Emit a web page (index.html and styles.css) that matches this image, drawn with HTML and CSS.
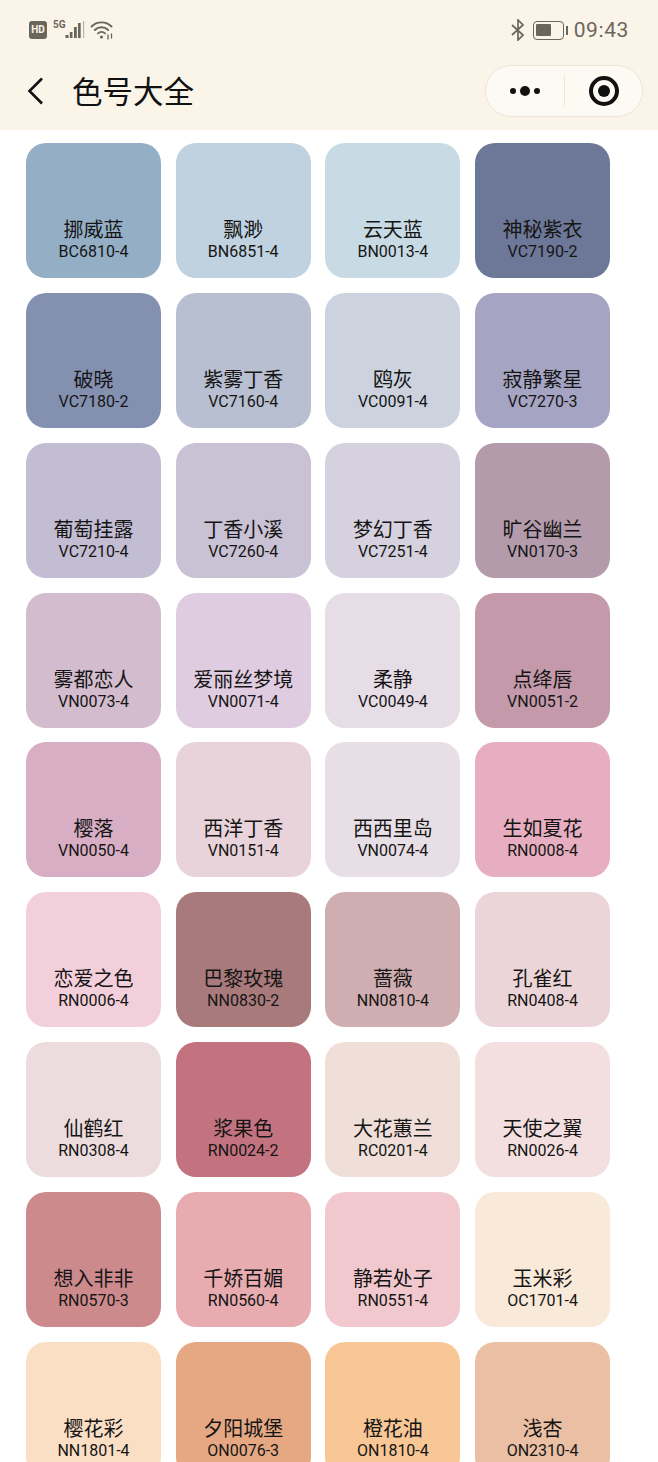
FILE: index.html
```html
<!DOCTYPE html>
<html lang="zh-CN">
<head>
    <meta charset="UTF-8">
    <meta name="viewport" content="width=device-width, initial-scale=1">
    <title>色号大全</title>
    <link rel="stylesheet" href="styles.css">
</head>
<body>

<header class="top">
    <div class="status">
        <div class="status-left">
            <span class="hd">HD</span>
            <span class="net">5G</span>
            <svg class="signal" width="20" height="20" viewBox="0 0 20 20">
                <rect x="0.5" y="15" width="3" height="3" fill="#6b665c"/>
                <rect x="4.800" y="12" width="2.700" height="6" fill="#6b665c"/>
                <rect x="9" y="7" width="2.800" height="11" fill="#6b665c"/>
                <rect x="13" y="3" width="2.700" height="15" fill="#6b665c"/>
                <rect x="18" y="1" width="1.200" height="17" fill="#b9b5aa"/>
            </svg>
            <svg class="wifi" width="24" height="20" viewBox="0 0 24 20" fill="none" stroke="#6b665c" stroke-width="1.900" stroke-linecap="round">
                <path d="M1.500 6.500C7 1 16 1 21.500 6.500"/>
                <path d="M4.800 10C8.500 6.400 14.500 6.400 18.200 10"/>
                <path d="M8 13.400C10 11.600 13 11.600 15 13.400"/>
                <circle cx="11.500" cy="17" r="1.600" fill="#6b665c" stroke="none"/>
                <path d="M18 15v4M21.500 14v4" stroke-width="1.300"/>
            </svg>
        </div>
        <div class="status-right">
            <svg class="bt" width="16" height="22" viewBox="0 0 16 22" fill="none" stroke="#6b665c" stroke-width="1.700">
                <path d="M2 6l11 10-5 5V1l5 5L2 16"/>
            </svg>
            <span class="battery"><span class="battery-level"></span></span>
            <span class="battery-tip"></span>
            <span class="clock">09:43</span>
        </div>
    </div>
    <div class="nav">
        <svg class="back" width="16" height="28" viewBox="0 0 16 28" fill="none" stroke="#111" stroke-width="2.600">
            <path d="M15 1.500L2.500 14 15 26.500"/>
        </svg>
        <h1 class="title">色号大全</h1>
        <div class="capsule">
            <div class="capsule-part">
                <span class="dot"></span><span class="dot dot-big"></span><span class="dot"></span>
            </div>
            <span class="capsule-line"></span>
            <div class="capsule-part">
                <span class="target"></span>
            </div>
        </div>
    </div>
</header>

<main class="swatches">
    <div class="swatch c-1"><p class="name">挪威蓝</p><p class="code">BC6810-4</p></div>
    <div class="swatch c-2"><p class="name">飘渺</p><p class="code">BN6851-4</p></div>
    <div class="swatch c-3"><p class="name">云天蓝</p><p class="code">BN0013-4</p></div>
    <div class="swatch c-4"><p class="name">神秘紫衣</p><p class="code">VC7190-2</p></div>

    <div class="swatch c-5"><p class="name">破晓</p><p class="code">VC7180-2</p></div>
    <div class="swatch c-6"><p class="name">紫雾丁香</p><p class="code">VC7160-4</p></div>
    <div class="swatch c-7"><p class="name">鸥灰</p><p class="code">VC0091-4</p></div>
    <div class="swatch c-8"><p class="name">寂静繁星</p><p class="code">VC7270-3</p></div>

    <div class="swatch c-9"><p class="name">葡萄挂露</p><p class="code">VC7210-4</p></div>
    <div class="swatch c-10"><p class="name">丁香小溪</p><p class="code">VC7260-4</p></div>
    <div class="swatch c-11"><p class="name">梦幻丁香</p><p class="code">VC7251-4</p></div>
    <div class="swatch c-12"><p class="name">旷谷幽兰</p><p class="code">VN0170-3</p></div>

    <div class="swatch c-13"><p class="name">雾都恋人</p><p class="code">VN0073-4</p></div>
    <div class="swatch c-14"><p class="name">爱丽丝梦境</p><p class="code">VN0071-4</p></div>
    <div class="swatch c-15"><p class="name">柔静</p><p class="code">VC0049-4</p></div>
    <div class="swatch c-16"><p class="name">点绛唇</p><p class="code">VN0051-2</p></div>

    <div class="swatch c-17"><p class="name">樱落</p><p class="code">VN0050-4</p></div>
    <div class="swatch c-18"><p class="name">西洋丁香</p><p class="code">VN0151-4</p></div>
    <div class="swatch c-19"><p class="name">西西里岛</p><p class="code">VN0074-4</p></div>
    <div class="swatch c-20"><p class="name">生如夏花</p><p class="code">RN0008-4</p></div>

    <div class="swatch c-21"><p class="name">恋爱之色</p><p class="code">RN0006-4</p></div>
    <div class="swatch c-22"><p class="name">巴黎玫瑰</p><p class="code">NN0830-2</p></div>
    <div class="swatch c-23"><p class="name">蔷薇</p><p class="code">NN0810-4</p></div>
    <div class="swatch c-24"><p class="name">孔雀红</p><p class="code">RN0408-4</p></div>

    <div class="swatch c-25"><p class="name">仙鹤红</p><p class="code">RN0308-4</p></div>
    <div class="swatch c-26"><p class="name">浆果色</p><p class="code">RN0024-2</p></div>
    <div class="swatch c-27"><p class="name">大花蕙兰</p><p class="code">RC0201-4</p></div>
    <div class="swatch c-28"><p class="name">天使之翼</p><p class="code">RN0026-4</p></div>

    <div class="swatch c-29"><p class="name">想入非非</p><p class="code">RN0570-3</p></div>
    <div class="swatch c-30"><p class="name">千娇百媚</p><p class="code">RN0560-4</p></div>
    <div class="swatch c-31"><p class="name">静若处子</p><p class="code">RN0551-4</p></div>
    <div class="swatch c-32"><p class="name">玉米彩</p><p class="code">OC1701-4</p></div>

    <div class="swatch c-33"><p class="name">樱花彩</p><p class="code">NN1801-4</p></div>
    <div class="swatch c-34"><p class="name">夕阳城堡</p><p class="code">ON0076-3</p></div>
    <div class="swatch c-35"><p class="name">橙花油</p><p class="code">ON1810-4</p></div>
    <div class="swatch c-36"><p class="name">浅杏</p><p class="code">ON2310-4</p></div>
</main>

</body>
</html>
```

FILE: styles.css
```css
* {
    box-sizing: border-box;
}

html, body {
    height: 100%;
}

body {
    margin: 0;
    height: 1462px;
    overflow: hidden;
    background: #fff;
    font-family: "Roboto", "Noto Sans CJK SC", sans-serif;
    color: #151515;
}

p, h1 {
    margin: 0;
    font-weight: 400;
}

.top {
    height: 130px;
    background: #fbf4e9;
}

.status {
    height: 60px;
    padding: 18px 29px 0 29px;
    display: flex;
    justify-content: space-between;
    align-items: flex-start;
    color: #6b665c;
}

.status-left, .status-right {
    display: flex;
    align-items: center;
    height: 24px;
}

.hd {
    width: 18px;
    height: 18px;
    border-radius: 3px;
    background: #6b665c;
    color: #fbf4e9;
    font-size: 10px;
    font-weight: 700;
    line-height: 18px;
    text-align: center;
}

.net {
    font-size: 10px;
    font-weight: 700;
    margin: -11px 0 0 6px;
}

.signal {
    margin-left: -1px;
}

.wifi {
    margin-left: 5px;
}

.bt {
    margin-right: 7px;
}

.battery {
    width: 31px;
    height: 19px;
    border: 1.500px solid #6b665c;
    border-radius: 4px;
    padding: 2px;
}

.battery-level {
    display: block;
    width: 15px;
    height: 12px;
    border-radius: 1px;
    background: #6b665c;
}

.battery-tip {
    width: 2px;
    height: 9px;
    margin: 0 6px 0 2px;
    background: #6b665c;
}

.clock {
    font-size: 21px;
    letter-spacing: 0.600px;
}

.nav {
    height: 52px;
    margin-top: 5px;
    padding: 0 15px 0 27px;
    display: flex;
    align-items: center;
}

.title {
    margin: 0 0 3px 29px;
    font-size: 30.500px;
    color: #111;
}

.capsule {
    margin-left: auto;
    width: 158px;
    height: 52px;
    display: flex;
    align-items: center;
    border: 1px solid #ebe5da;
    border-radius: 26px;
    background: #fdf9f3;
}

.capsule-part {
    flex: 1;
    display: flex;
    align-items: center;
    justify-content: center;
    gap: 4px;
}

.capsule-line {
    width: 1px;
    height: 32px;
    background: #ebe5da;
}

.dot {
    width: 6px;
    height: 6px;
    border-radius: 50%;
    background: #111;
}

.dot-big {
    width: 10px;
    height: 10px;
}

.target {
    width: 30px;
    height: 30px;
    margin-left: 2px;
    border: 4px solid #111;
    border-radius: 50%;
    display: flex;
    align-items: center;
    justify-content: center;
}

.target::after {
    content: "";
    width: 12px;
    height: 12px;
    border-radius: 50%;
    background: #111;
}

.swatches {
    display: grid;
    grid-template-columns: repeat(4, 135px);
    grid-auto-rows: 135px;
    column-gap: 14.700px;
    row-gap: 14.850px;
    padding: 13px 0 0 26px;
}

.swatch {
    border-radius: 20px;
    padding-bottom: 17px;
    display: flex;
    flex-direction: column;
    justify-content: flex-end;
    align-items: center;
    text-align: center;
}

.name {
    font-size: 20px;
    line-height: 25px;
}

.code {
    font-size: 16px;
    line-height: 18px;
}

.c-1 { background: #94afc5; }
.c-2 { background: #c0d2e0; }
.c-3 { background: #c8dbe4; }
.c-4 { background: #6d7898; }
.c-5 { background: #8490b0; }
.c-6 { background: #b8bfd0; }
.c-7 { background: #ccd3de; }
.c-8 { background: #a6a4c3; }
.c-9 { background: #c3bdd3; }
.c-10 { background: #c9c1d4; }
.c-11 { background: #d6d1de; }
.c-12 { background: #b39bac; }
.c-13 { background: #d3bccd; }
.c-14 { background: #e0cce0; }
.c-15 { background: #e6dde6; }
.c-16 { background: #c49aab; }
.c-17 { background: #d8aec4; }
.c-18 { background: #e8d3da; }
.c-19 { background: #e8dfe6; }
.c-20 { background: #e6aec0; }
.c-21 { background: #f3cfdb; }
.c-22 { background: #a97a7c; }
.c-23 { background: #cfadb0; }
.c-24 { background: #ecd5d8; }
.c-25 { background: #eddcde; }
.c-26 { background: #c3727f; }
.c-27 { background: #efdfd8; }
.c-28 { background: #f3dfdf; }
.c-29 { background: #cd8a8c; }
.c-30 { background: #e7abb0; }
.c-31 { background: #f0c8cd; }
.c-32 { background: #f9e9d9; }
.c-33 { background: #fbdfc4; }
.c-34 { background: #e6a883; }
.c-35 { background: #f9c795; }
.c-36 { background: #eabfa3; }
```
